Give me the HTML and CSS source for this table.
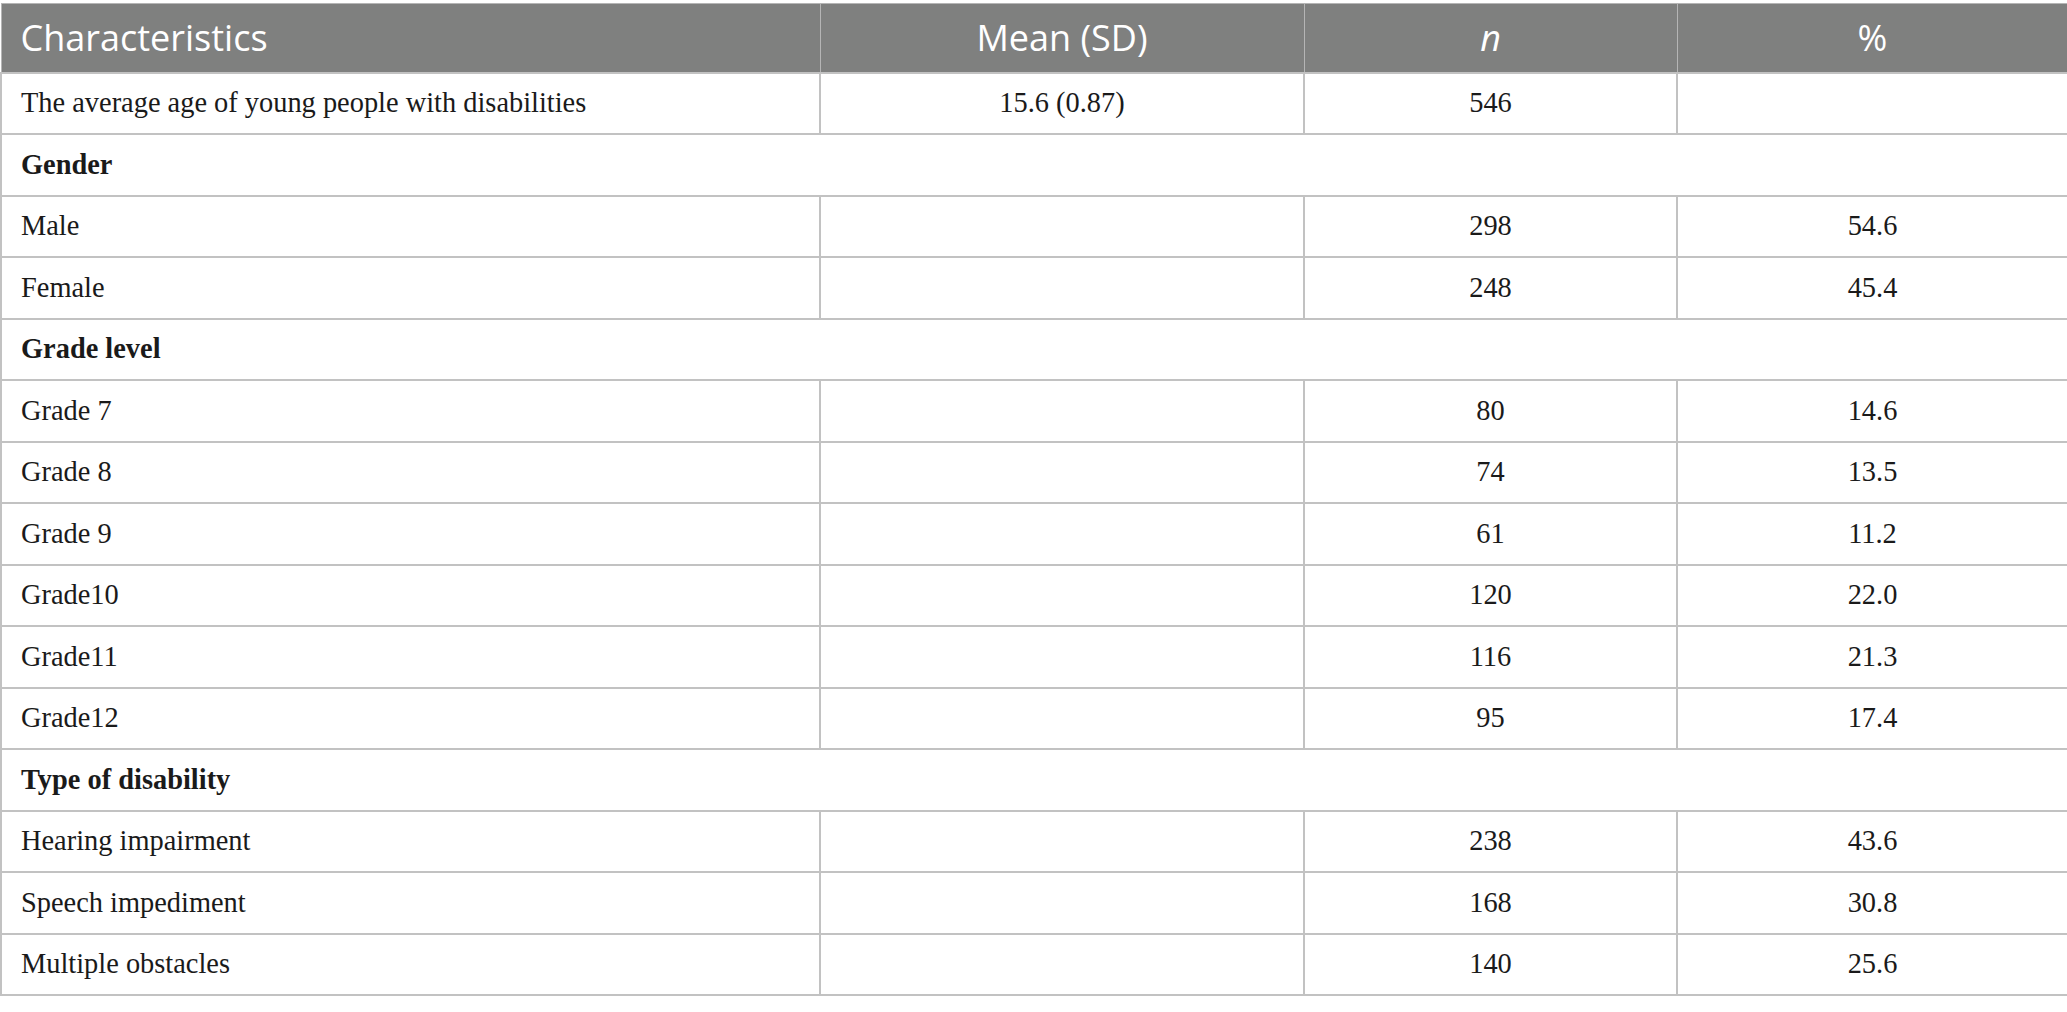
FILE: index.html
```html
<!DOCTYPE html>
<html>
<head>
<meta charset="utf-8">
<link rel="stylesheet" href="styles.css">
</head>
<body>
<div class="wrap">
<table class="tbl">
  <colgroup>
    <col class="c1"><col class="c2"><col class="c3"><col class="c4">
  </colgroup>
  <thead>
    <tr><th class="left">Characteristics</th><th>Mean (SD)</th><th><i>n</i></th><th>%</th></tr>
  </thead>
  <tbody>
    <tr><td class="left">The average age of young people with disabilities</td><td>15.6 (0.87)</td><td>546</td><td></td></tr>
    <tr class="group"><td class="left" colspan="4">Gender</td></tr>
    <tr><td class="left">Male</td><td></td><td>298</td><td>54.6</td></tr>
    <tr><td class="left">Female</td><td></td><td>248</td><td>45.4</td></tr>
    <tr class="group"><td class="left" colspan="4">Grade level</td></tr>
    <tr><td class="left">Grade 7</td><td></td><td>80</td><td>14.6</td></tr>
    <tr><td class="left">Grade 8</td><td></td><td>74</td><td>13.5</td></tr>
    <tr><td class="left">Grade 9</td><td></td><td>61</td><td>11.2</td></tr>
    <tr><td class="left">Grade10</td><td></td><td>120</td><td>22.0</td></tr>
    <tr><td class="left">Grade11</td><td></td><td>116</td><td>21.3</td></tr>
    <tr><td class="left">Grade12</td><td></td><td>95</td><td>17.4</td></tr>
    <tr class="group"><td class="left" colspan="4">Type of disability</td></tr>
    <tr><td class="left">Hearing impairment</td><td></td><td>238</td><td>43.6</td></tr>
    <tr><td class="left">Speech impediment</td><td></td><td>168</td><td>30.8</td></tr>
    <tr><td class="left">Multiple obstacles</td><td></td><td>140</td><td>25.6</td></tr>
  </tbody>
</table>
</div>
</body>
</html>
```
FILE: styles.css
```css
html, body { margin: 0; padding: 0; background: #fff; }
.wrap { padding-top: 3px; width: 2067px; }
.tbl {
  width: 2067px;
  border-collapse: collapse;
  table-layout: fixed;
  font-family: "Liberation Serif", serif;
  color: #1a1a1a;
}
.c1 { width: 819px; }
.c2 { width: 484px; }
.c3 { width: 373px; }
.c4 { width: 391px; }
.tbl th {
  background: #7f807f;
  color: #fff;
  font-family: "Open Sans", sans-serif;
  font-weight: 400;
  font-size: 36px;
  height: 69px;
  padding: 0 19px;
  text-align: center;
  border: 1px solid #b5b5b5;
  box-sizing: border-box;
}
.tbl td {
  height: 61.5px;
  font-size: 28.4px;
  padding: 0 19px;
  text-align: center;
  border: 2px solid #c2c2c2;
  box-sizing: border-box;
}
.tbl .left { text-align: left; }
.group td { font-weight: 700; }
```
